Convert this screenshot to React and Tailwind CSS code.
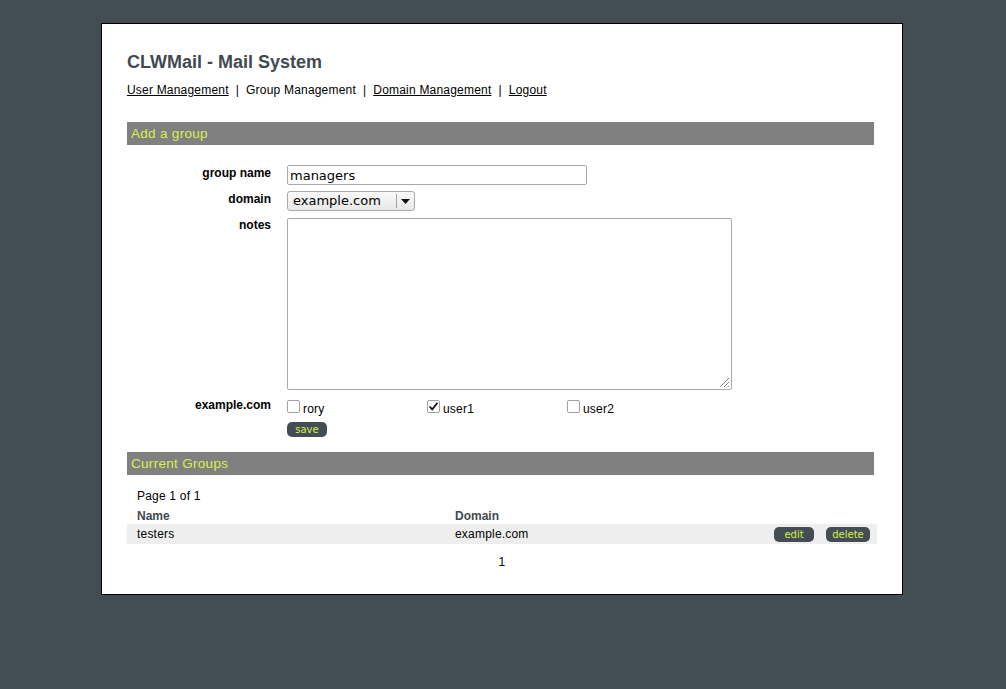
import React from 'react';

const yellow = 'text-[#d9ef4c]';

const Box = ({ checked }) => (
  <span className="w-[13px] h-[13px] border border-[#a0a0a0] rounded-[2px] bg-white flex items-center justify-center shrink-0">
    {checked && (
      <svg width="11" height="11" viewBox="0 0 11 11">
        <path d="M1.5 5.5 L4.2 8.3 L9.5 1.8" fill="none" stroke="#111" strokeWidth="1.8" />
      </svg>
    )}
  </span>
);

const Pill = ({ children, className = '' }) => (
  <button
    type="button"
    className={`h-[15px] rounded-[5px] bg-[#434e54] ${yellow} text-[10px] leading-[15px] tracking-normal font-['DejaVu_Sans',sans-serif] ${className}`}
  >
    {children}
  </button>
);

const Bar = ({ children }) => (
  <div className={`h-[23px] w-[747px] bg-[#808080] ${yellow} text-[13.5px] leading-[23px] pl-1 tracking-[0.3px]`}>
    {children}
  </div>
);

export default function App() {
  return (
    <div className="min-h-[689px] bg-[#434e54] pt-[23px] font-['Liberation_Sans',Arial,sans-serif] text-[12px] text-black tracking-[0.2px]">
      <div className="ml-[101px] w-[802px] h-[572px] bg-white border border-black pl-[25px] pt-[25px]">
        <h1 className="text-[18px] leading-[22px] font-bold text-[#3f4a50] tracking-normal mt-[2px]">CLWMail - Mail System</h1>

        <div className="mt-[10px] leading-[14px] flex gap-[7px]">
          <a className="underline">User Management</a>
          <span>|</span>
          <span>Group Management</span>
          <span>|</span>
          <a className="underline">Domain Management</a>
          <span>|</span>
          <a className="underline">Logout</a>
        </div>

        <div className="mt-[25px]">
          <Bar>Add a group</Bar>
        </div>

        <div className="mt-[20px] grid grid-cols-[144px_1fr] gap-x-4">
          <label className="text-right font-bold leading-[16px] tracking-normal">group name</label>
          <input
            defaultValue="managers"
            className="w-[300px] h-[20px] border border-[#a9a9a9] rounded-[2px] px-[2px] text-[13px] tracking-normal font-['DejaVu_Sans',sans-serif] outline-none"
          />

          <label className="text-right font-bold leading-[16px] mt-[6px] tracking-normal">domain</label>
          <div className="mt-[6px] w-[128px] h-[20px] border border-[#a9a9a9] rounded-[3px] bg-[linear-gradient(#fafafa,#e8e8e8)] flex items-center text-[13px] tracking-normal font-['DejaVu_Sans',sans-serif]">
            <span className="flex-1 pl-[5px]">example.com</span>
            <span className="w-[18px] h-[14px] border-l border-[#a0a0a0] flex items-center justify-center">
              <svg width="9" height="5" viewBox="0 0 9 5"><path d="M0 0 H9 L4.5 5 Z" fill="#111" /></svg>
            </span>
          </div>

          <label className="text-right font-bold leading-[16px] mt-[6px] tracking-normal">notes</label>
          <div className="mt-[7px] relative w-[445px] h-[172px] border border-[#a9a9a9] rounded-[2px]">
            <svg className="absolute right-[1px] bottom-[1px]" width="12" height="12" viewBox="0 0 12 12">
              <path d="M11 2 L2 11 M11 6 L6 11 M11 10 L10 11" stroke="#888" strokeWidth="1" />
            </svg>
          </div>

          <label className="text-right font-bold leading-[16px] mt-[7px] tracking-normal">example.com</label>
          <div className="mt-[7px]">
            <div className="flex">
              {[['rory', false], ['user1', true], ['user2', false]].map(([n, c]) => (
                <div key={n} className="w-[140px] flex items-center gap-[3px]">
                  <Box checked={c} />
                  <span className="mt-[5px] leading-[14px]">{n}</span>
                </div>
              ))}
            </div>
            <Pill className="mt-[6px] w-[40px]">save</Pill>
          </div>
        </div>

        <div className="mt-[14px]">
          <Bar>Current Groups</Bar>
        </div>

        <div className="w-[750px]">
          <div className="mt-[14px] pl-[10px] leading-[14px]">Page 1 of 1</div>
          <div className="mt-[6px] flex leading-[14px] font-bold text-[#3f4a50] tracking-normal">
            <span className="w-[328px] pl-[10px]">Name</span>
            <span>Domain</span>
          </div>
          <div className="mt-[1px] h-[20px] bg-[#eeeeee] flex items-center">
            <span className="w-[328px] pl-[10px]">testers</span>
            <span className="flex-1">example.com</span>
            <Pill className="w-[40px] mr-[12px]">edit</Pill>
            <Pill className="w-[44px] mr-[7px]">delete</Pill>
          </div>
          <div className="mt-[11px] text-center leading-[14px]">1</div>
        </div>
      </div>
    </div>
  );
}
